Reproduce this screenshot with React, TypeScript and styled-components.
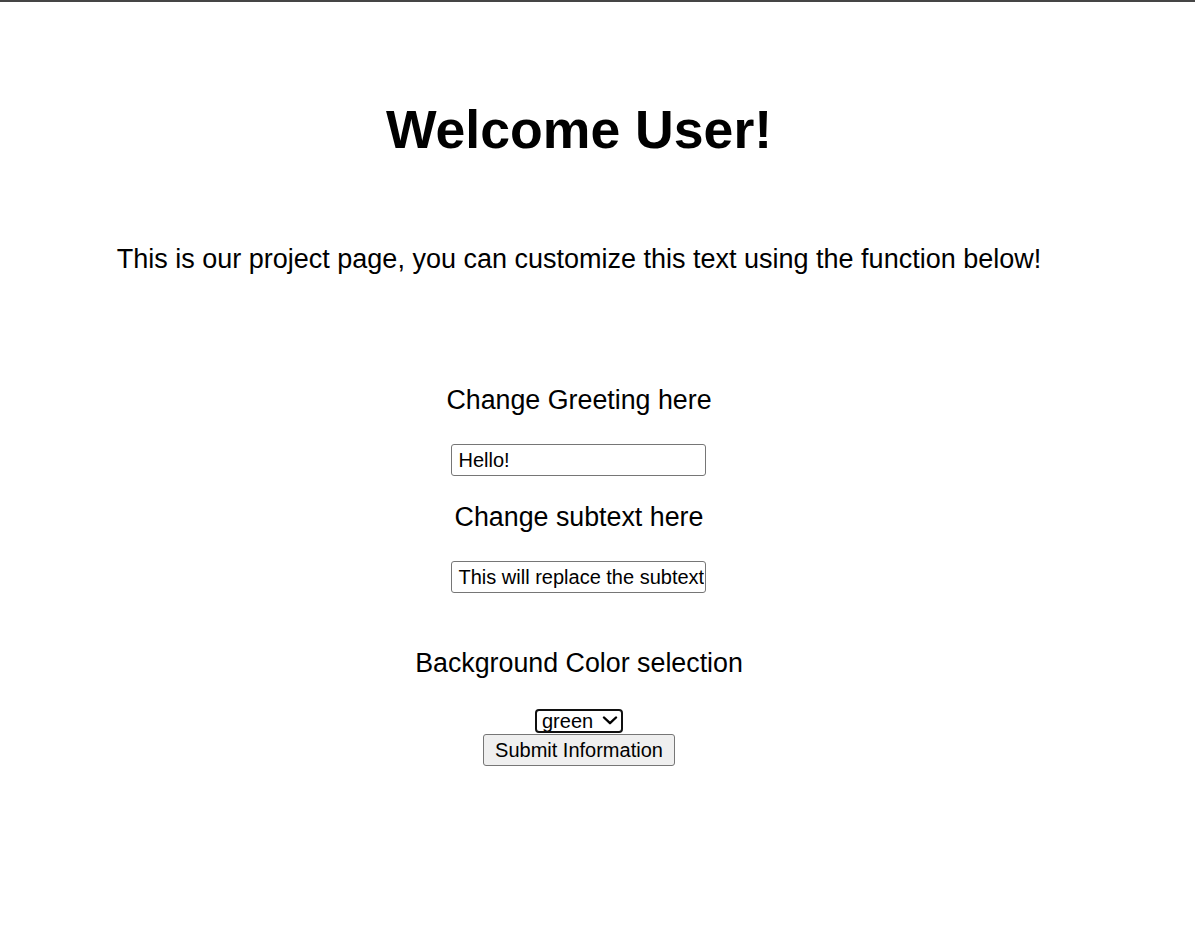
import React from "react"
import styled, { createGlobalStyle } from "styled-components"

const colors: ReadonlyArray<string> = ["green", "blue", "red", "white"]

const GlobalStyle = createGlobalStyle`
  html, body {
    margin: 0;
    padding: 0;
    background: #ffffff;
  }
  body {
    border-top: 2px solid #454545;
    font-family: "Liberation Sans", Arial, sans-serif;
    color: #000000;
  }
`

const Page = styled.main`
  width: 1158px;
  display: flex;
  flex-direction: column;
  align-items: center;
  text-align: center;
`

const Title = styled.h1`
  margin: 96px 0 0;
  font-size: 53.6px;
  line-height: 62px;
  font-weight: 700;
`

const Subtext = styled.p`
  margin: 84px 0 0;
  font-size: 27px;
  line-height: 31px;
`

const Form = styled.form`
  display: flex;
  flex-direction: column;
  align-items: center;
  margin-top: 110px;
`

const Label = styled.label<{ $gap?: number }>`
  display: block;
  margin-top: ${(p) => p.$gap ?? 0}px;
  font-size: 26.8px;
  line-height: 31px;
`

const TextField = styled.input`
  box-sizing: border-box;
  width: 255px;
  height: 32px;
  margin-top: 28px;
  padding: 0 1px 0 6px;
  border: 1px solid #767676;
  border-radius: 3px;
  font-family: inherit;
  font-size: 20px;
  color: #000000;
  background: #ffffff;
`

const SelectWrap = styled.div`
  position: relative;
  margin-top: 30px;
  height: 24px;
`

const ColorSelect = styled.select`
  appearance: none;
  box-sizing: border-box;
  width: 88px;
  height: 24px;
  margin: 0;
  padding: 0 0 0 5px;
  border: 2px solid #101010;
  border-radius: 4px;
  font-family: inherit;
  font-size: 20px;
  line-height: 20px;
  color: #000000;
  background: #ffffff;
  text-align: left;
`

const Arrow = styled.svg`
  position: absolute;
  right: 5px;
  top: 7px;
  pointer-events: none;
`

const SubmitButton = styled.button`
  box-sizing: border-box;
  width: 192px;
  height: 32px;
  margin-top: 1px;
  border: 1px solid #767676;
  border-radius: 3px;
  background: #efefef;
  font-family: inherit;
  font-size: 20px;
  color: #000000;
`

export default function App() {
  const [greeting, setGreeting] = React.useState("Hello!")
  const [subtext, setSubtext] = React.useState(
    "This will replace the subtext"
  )
  const [color, setColor] = React.useState("green")

  return (
    <>
      <GlobalStyle />
      <Page>
        <Title>Welcome User!</Title>
        <Subtext>
          This is our project page, you can customize this text using the
          function below!
        </Subtext>
        <Form onSubmit={(ev) => ev.preventDefault()}>
          <Label htmlFor="greeting">Change Greeting here</Label>
          <TextField
            id="greeting"
            value={greeting}
            onChange={(ev) => setGreeting(ev.target.value)}
          />
          <Label htmlFor="subtext" $gap={26}>
            Change subtext here
          </Label>
          <TextField
            id="subtext"
            value={subtext}
            onChange={(ev) => setSubtext(ev.target.value)}
          />
          <Label htmlFor="bgcolor" $gap={55}>
            Background Color selection
          </Label>
          <SelectWrap>
            <ColorSelect
              id="bgcolor"
              value={color}
              onChange={(ev) => setColor(ev.target.value)}
            >
              {colors.map((c) => (
                <option key={c} value={c}>
                  {c}
                </option>
              ))}
            </ColorSelect>
            <Arrow width="16" height="9" viewBox="0 0 16 9">
              <polyline
                points="2,1.5 8,7.2 14,1.5"
                fill="none"
                stroke="#000"
                strokeWidth="2.4"
                strokeLinecap="round"
                strokeLinejoin="round"
              />
            </Arrow>
          </SelectWrap>
          <SubmitButton type="submit">Submit Information</SubmitButton>
        </Form>
      </Page>
    </>
  )
}
